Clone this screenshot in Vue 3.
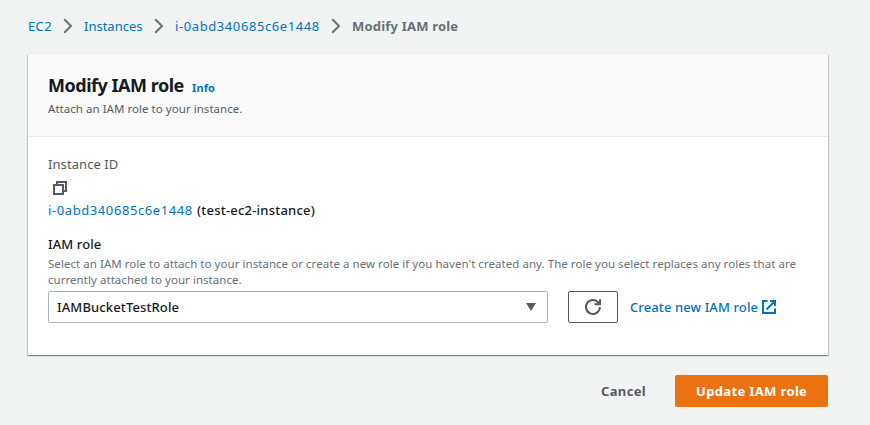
<script setup>
const crumbs = [
  { text: 'EC2', cls: 'c1' },
  { text: 'Instances', cls: 'c2' },
  { text: 'i-0abd340685c6e1448', cls: 'c3' },
]
</script>

<template>
  <div class="page">
    <nav class="crumbs">
      <template v-for="c in crumbs" :key="c.text">
        <a class="link crumb" :class="c.cls"><span>{{ c.text }}</span></a>
        <svg class="chev" width="10" height="16" viewBox="0 0 10 16"><path d="M1.200 1.200 8 8l-6.800 6.800" /></svg>
      </template>
      <span class="current">Modify IAM role</span>
    </nav>

    <section class="card">
      <header class="head">
        <div class="titlerow">
          <h1>Modify IAM role</h1>
          <a class="link info">Info</a>
        </div>
        <p class="sub">Attach an IAM role to your instance.</p>
      </header>
      <div class="body">
        <div class="label muted">Instance ID</div>
        <svg class="copy" width="16" height="16" viewBox="0 0 16 16"><path d="M2 5h9v9H2zM5 5V2h9v9h-3" /></svg>
        <div class="idrow"><a class="link id">i-0abd340685c6e1448</a><span class="name">(test-ec2-instance)</span></div>
        <div class="label role">IAM role</div>
        <p class="desc"><span>Select an IAM role to attach to your instance or create a new role if you haven't created any. The role you select replaces any roles that are</span><br><span>currently attached to your instance.</span></p>
        <div class="controls">
          <button class="select"><span>IAMBucketTestRole</span><svg width="10" height="8" viewBox="0 0 10 8"><path d="M0 0h10L5 8z" /></svg></button>
          <button class="refresh"><svg width="18" height="18" viewBox="0 0 18 18"><path d="M15.900 9A7 7 0 1 1 14.400 4.600L16 6.200M16 1.200v5h-5.500" /></svg></button>
          <a class="link create"><span>Create new IAM role</span><svg width="16" height="16" viewBox="0 0 16 16"><path d="M6.500 2H2v12h12V9.500M9 2h5v5M14 2 5.500 10.500" /></svg></a>
        </div>
      </div>
    </section>

    <footer class="actions">
      <button class="cancel">Cancel</button>
      <button class="update">Update IAM role</button>
    </footer>
  </div>
</template>

<style>
body { background: #f2f3f3; }
</style>
<style scoped>
* { box-sizing: border-box; }
.page { height: 425px; padding: 16px 42px 0 28px; background: #f2f3f3; font: 500 13px/20px "Noto Sans", sans-serif; color: #16191f; white-space: nowrap; overflow: hidden; }
.link { color: #0073bb; }
svg { display: block; flex: none; fill: none; }
button { font: inherit; color: inherit; border: 0; background: none; padding: 0; margin: 0; }
.crumbs { display: flex; align-items: center; height: 20px; font-weight: 450; }
.crumb { flex: none; }
.c1 { width: 35px; letter-spacing: .35px; }
.c2 { width: 70px; }
.c3 { width: 156px; letter-spacing: .59px; }
.chev { margin-right: 11px; stroke: #687078; stroke-width: 2; }
.current { font-weight: 700; color: #687078; letter-spacing: .2px; }
.card { margin-top: 18px; width: 800px; height: 301px; background: #fff; box-shadow: 0 1px 1px 0 rgba(0,28,36,.3), 1px 1px 1px 0 rgba(0,28,36,.15), -1px 1px 1px 0 rgba(0,28,36,.15), 0 -1px 0 0 #eaeded; }
.head { height: 83px; padding: 19px 20px 0; background: #fafafa; border-bottom: 1px solid #eaeded; }
.titlerow { display: flex; align-items: baseline; height: 24px; }
h1 { margin: 0; width: 144px; font-size: 18px; line-height: 24px; font-weight: 700; letter-spacing: -.48px; }
.info { font-size: 11px; font-weight: 700; letter-spacing: .1px; }
p { margin: 0; }
.sub { font-size: 11.500px; line-height: 16px; margin-top: 4px; color: #545b64; font-weight: 400; letter-spacing: .04px; }
.body { padding: 17px 20px 0; }
.muted { color: #545b64; font-weight: 400; letter-spacing: .08px; }
.copy { margin: 6px 0 4px 4px; stroke: #545b64; stroke-width: 2; }
.idrow { display: flex; }
.id { width: 149px; letter-spacing: .59px; font-weight: 450; }
.name { letter-spacing: .22px; }
.role { margin-top: 14px; letter-spacing: .1px; }
.desc { font-size: 11.500px; line-height: 16px; color: #687078; font-weight: 400; margin-top: 2px; letter-spacing: .047px; }
.controls { display: flex; align-items: center; margin-top: 3px; height: 32px; }
.select { display: flex; align-items: center; justify-content: space-between; width: 500px; height: 32px; padding: 0 11px 0 8px; border: 1px solid #aab7b8; border-radius: 2px; background: #fff; letter-spacing: .12px; }
.select svg { fill: #545b64; }
.refresh { display: flex; align-items: center; justify-content: center; width: 50px; height: 32px; margin-left: 20px; border: 1px solid #545b64; border-radius: 2px; }
.refresh svg { stroke: #545b64; stroke-width: 2; }
.create { display: flex; align-items: center; margin-left: 12px; letter-spacing: .11px; }
.create span { width: 131px; }
.create svg { stroke: #0073bb; stroke-width: 2; }
.actions { display: flex; justify-content: flex-end; margin-top: 20px; height: 32px; width: 800px; }
.cancel { width: 45px; margin-right: 29px; font-weight: 700; color: #545b64; text-align: left; letter-spacing: .35px; }
.update { width: 153px; padding-left: 21px; text-align: left; font-weight: 700; color: #fff; background: #ec7211; border-radius: 2px; letter-spacing: .36px; }
</style>
